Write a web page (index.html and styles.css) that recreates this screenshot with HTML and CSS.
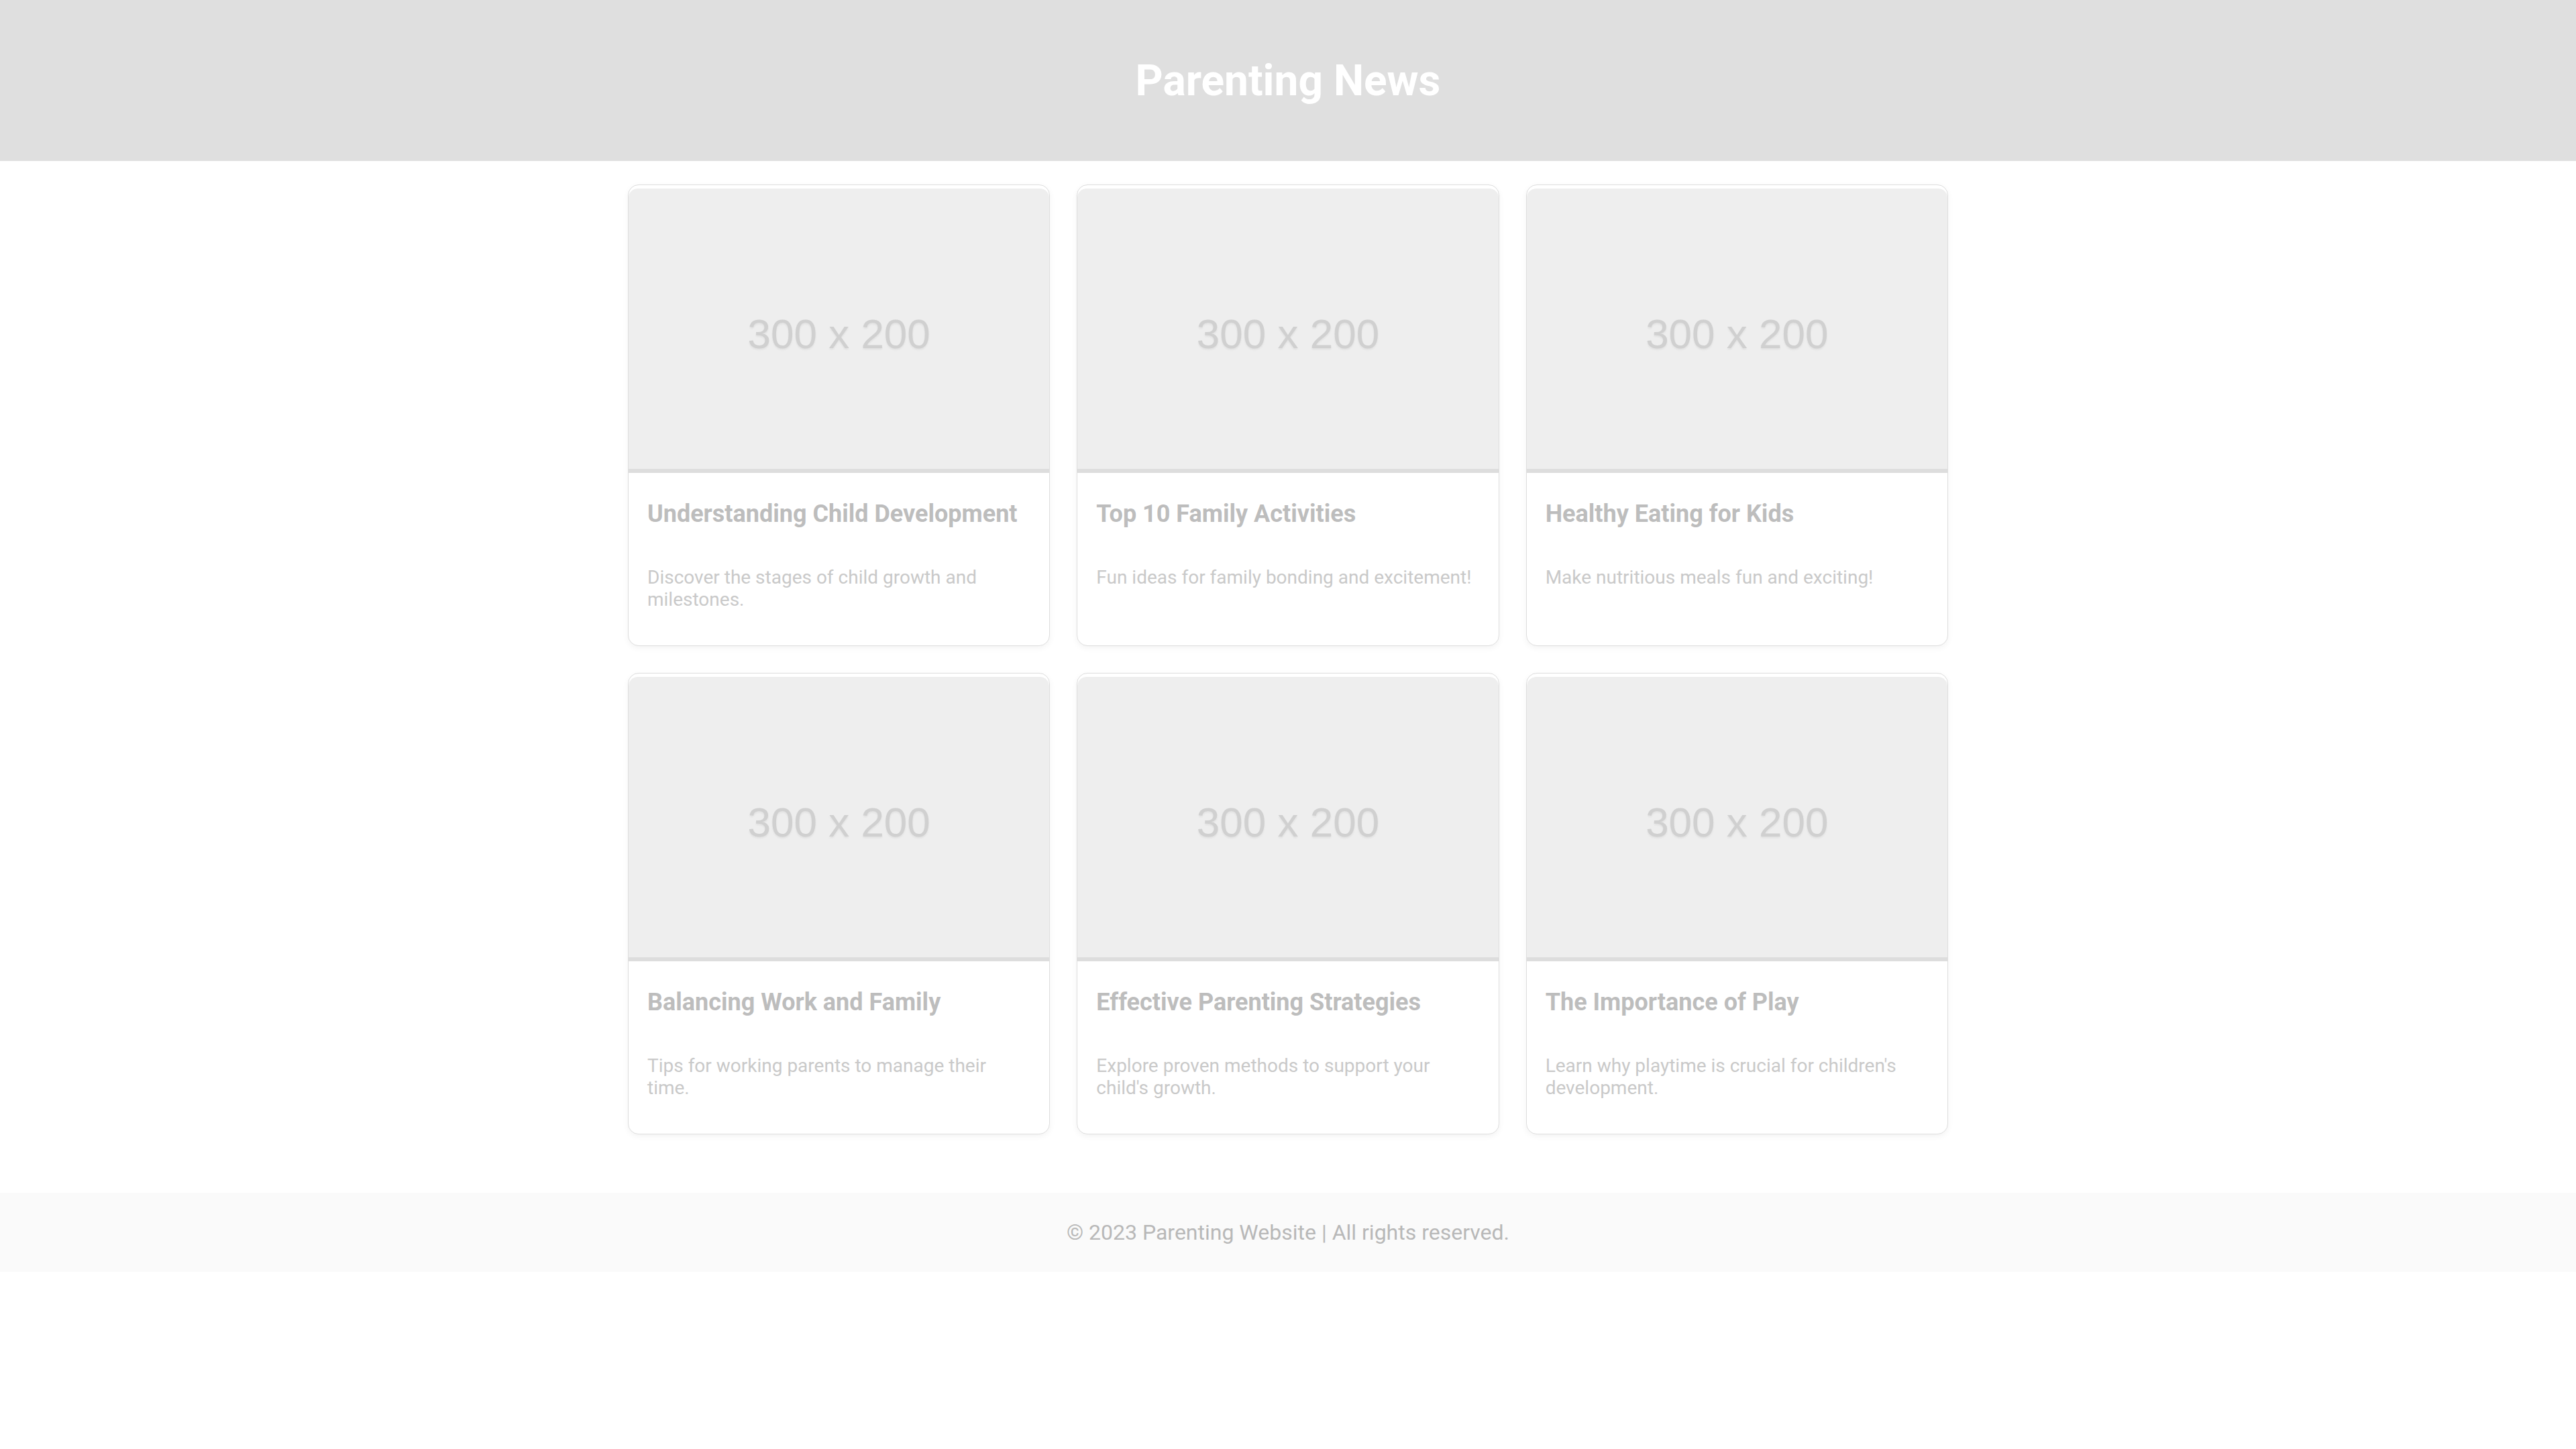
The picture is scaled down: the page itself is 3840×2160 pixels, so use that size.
FILE: index.html
```html
<!DOCTYPE html>
<html lang="en">
<head>
<meta charset="utf-8">
<title>Parenting News</title>
<link rel="stylesheet" href="styles.css">
</head>
<body>
<header class="site-header">
  <h1 class="site-title">Parenting News</h1>
</header>
<main class="content">
  <div class="grid">
    <article class="card">
      <div class="thumb"><span>300 x 200</span></div>
      <div class="card-body">
        <h3 class="card-title">Understanding Child Development</h3>
        <p class="card-text">Discover the stages of child growth and milestones.</p>
      </div>
    </article>
    <article class="card">
      <div class="thumb"><span>300 x 200</span></div>
      <div class="card-body">
        <h3 class="card-title">Top 10 Family Activities</h3>
        <p class="card-text">Fun ideas for family bonding and excitement!</p>
      </div>
    </article>
    <article class="card">
      <div class="thumb"><span>300 x 200</span></div>
      <div class="card-body">
        <h3 class="card-title">Healthy Eating for Kids</h3>
        <p class="card-text">Make nutritious meals fun and exciting!</p>
      </div>
    </article>
    <article class="card">
      <div class="thumb"><span>300 x 200</span></div>
      <div class="card-body">
        <h3 class="card-title">Balancing Work and Family</h3>
        <p class="card-text">Tips for working parents to manage their time.</p>
      </div>
    </article>
    <article class="card">
      <div class="thumb"><span>300 x 200</span></div>
      <div class="card-body">
        <h3 class="card-title">Effective Parenting Strategies</h3>
        <p class="card-text">Explore proven methods to support your child's growth.</p>
      </div>
    </article>
    <article class="card">
      <div class="thumb"><span>300 x 200</span></div>
      <div class="card-body">
        <h3 class="card-title">The Importance of Play</h3>
        <p class="card-text">Learn why playtime is crucial for children's development.</p>
      </div>
    </article>
  </div>
</main>
<footer class="site-footer">
  <p class="footer-text">© 2023 Parenting Website | All rights reserved.</p>
</footer>
</body>
</html>
```

FILE: styles.css
```css
* {
  box-sizing: border-box;
}

html, body {
  margin: 0;
  padding: 0;
  background: #ffffff;
}

body {
  font-family: Roboto, "Noto Sans", "Liberation Sans", sans-serif;
  color: #bdbdbd;
}

.site-header {
  background: #dfdfdf;
  padding: 83px 0 82px;
  text-align: center;
}

.site-title {
  margin: 0;
  font-size: 64px;
  font-weight: 700;
  line-height: normal;
  color: #ffffff;
}

.content {
  padding: 35px 0 87px;
}

.grid {
  max-width: 1968px;
  margin: 0 auto;
  display: grid;
  grid-template-columns: repeat(3, 1fr);
  gap: 40px;
}

.card {
  background: #ffffff;
  border: 1px solid #dedede;
  border-radius: 16px;
  overflow: hidden;
  box-shadow: 0 3px 10px rgba(0, 0, 0, 0.05);
  display: flex;
  flex-direction: column;
}

.thumb {
  box-sizing: content-box;
  margin-top: 5px;
  aspect-ratio: 3 / 2;
  background: #eeeeee;
  border-top-left-radius: 14px;
  border-top-right-radius: 14px;
  border-bottom: 6px solid #dddddd;
  display: flex;
  align-items: center;
  justify-content: center;
}

.thumb span {
  padding-top: 14px;
  font-family: "Liberation Sans", Arial, sans-serif;
  font-size: 62px;
  color: #d0d0d0;
  text-shadow: 0 2px 3px rgba(0, 0, 0, 0.06);
}

.card-body {
  padding: 40px 28px 52px;
}

.card-title {
  margin: 0;
  font-size: 36px;
  font-weight: 700;
  line-height: normal;
  color: #bdbdbd;
}

.card-text {
  margin: 57px 0 0;
  font-size: 28px;
  line-height: 33px;
  color: #c9c9c9;
}

.site-footer {
  background: #fafafa;
  padding: 40px 0;
  text-align: center;
}

.footer-text {
  margin: 0;
  font-size: 32px;
  line-height: normal;
  color: #b8b8b8;
}
```
